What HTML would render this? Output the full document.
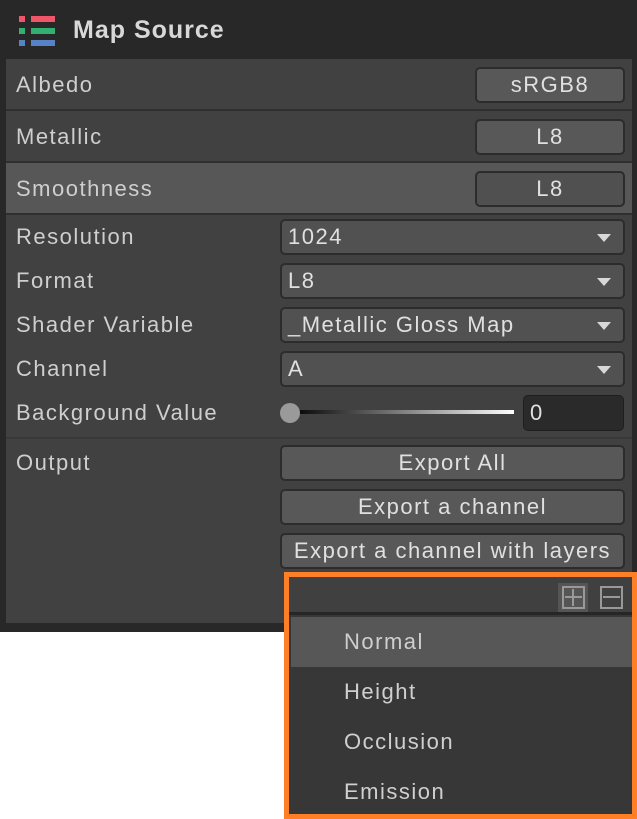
<!DOCTYPE html>
<html><head><style>
*{margin:0;padding:0;box-sizing:border-box}
body{width:637px;height:819px;background:#fff;font-family:"Liberation Sans",sans-serif;color:#d2d2d2;position:relative;overflow:hidden}
.a{position:absolute}
.outer{left:0;top:0;width:637px;height:632px;background:#282828}
.panel{left:6px;top:59px;width:626px;height:564px;background:#414141}
.lbl{font-size:22px;color:#cfcfcf;white-space:nowrap;letter-spacing:1.5px}
.btn{background:#585858;border:2px solid #2c2c2c;border-radius:5px;font-size:22px;color:#e0e0e0;text-align:center;line-height:31px;letter-spacing:1.5px;white-space:nowrap}
.dd{background:#515151;border:2px solid #2c2c2c;border-radius:5px;font-size:22px;color:#e0e0e0;padding-left:6px;line-height:31px;letter-spacing:1.5px}
.dd:after{content:"";position:absolute;right:12px;top:13px;border-left:7px solid transparent;border-right:7px solid transparent;border-top:8px solid #d8d8d8}
</style></head><body>
<div class="a outer"></div>
<div class="a" style="left:19px;top:16px;width:6px;height:6px;background:#f0566a"></div>
<div class="a" style="left:31px;top:16px;width:24px;height:6px;background:#f0566a"></div>
<div class="a" style="left:19px;top:28px;width:6px;height:6px;background:#32b072"></div>
<div class="a" style="left:31px;top:28px;width:24px;height:6px;background:#32b072"></div>
<div class="a" style="left:19px;top:40px;width:6px;height:6px;background:#5783c6"></div>
<div class="a" style="left:31px;top:40px;width:24px;height:6px;background:#5783c6"></div>
<div class="a" style="left:73px;top:16px;font-size:25px;font-weight:bold;color:#d8d8d8;letter-spacing:1px">Map Source</div>
<div class="a panel"></div>
<div class="a" style="left:6px;top:109px;width:626px;height:2px;background:#2f2f2f"></div>
<div class="a" style="left:6px;top:161px;width:626px;height:2px;background:#2f2f2f"></div>
<div class="a" style="left:6px;top:163px;width:626px;height:50px;background:#575757"></div>
<div class="a" style="left:6px;top:213px;width:626px;height:2px;background:#2f2f2f"></div>
<div class="a lbl" style="left:16px;top:72px">Albedo</div>
<div class="a lbl" style="left:16px;top:124px">Metallic</div>
<div class="a lbl" style="left:16px;top:176px">Smoothness</div>
<div class="a btn" style="left:475px;top:67px;width:150px;height:36px">sRGB8</div>
<div class="a btn" style="left:475px;top:119px;width:150px;height:36px">L8</div>
<div class="a btn" style="left:475px;top:171px;width:150px;height:36px;background:#505050">L8</div>
<div class="a lbl" style="left:16px;top:224px">Resolution</div>
<div class="a lbl" style="left:16px;top:268px">Format</div>
<div class="a lbl" style="left:16px;top:312px">Shader Variable</div>
<div class="a lbl" style="left:16px;top:356px">Channel</div>
<div class="a lbl" style="left:16px;top:400px">Background Value</div>
<div class="a lbl" style="left:16px;top:450px">Output</div>
<div class="a dd" style="left:280px;top:219px;width:345px;height:36px">1024</div>
<div class="a dd" style="left:280px;top:263px;width:345px;height:36px">L8</div>
<div class="a dd" style="left:280px;top:307px;width:345px;height:36px">_Metallic Gloss Map</div>
<div class="a dd" style="left:280px;top:351px;width:345px;height:36px">A</div>
<div class="a" style="left:290px;top:410px;width:224px;height:4px;background:linear-gradient(90deg,#000,#fff)"></div>
<div class="a" style="left:280px;top:403px;width:20px;height:20px;border-radius:50%;background:#9a9a9a"></div>
<div class="a" style="left:523px;top:395px;width:101px;height:36px;background:#2a2a2a;border:1px solid #1e1e1e;border-radius:5px;font-size:22px;color:#e0e0e0;padding-left:6px;line-height:34px">0</div>
<div class="a" style="left:6px;top:437px;width:626px;height:2px;background:#383838"></div>
<div class="a btn" style="left:280px;top:445px;width:345px;height:36px">Export All</div>
<div class="a btn" style="left:280px;top:489px;width:345px;height:36px">Export a channel</div>
<div class="a btn" style="left:280px;top:533px;width:345px;height:36px">Export a channel with layers</div>
<div class="a" style="left:284px;top:572px;width:353px;height:247px;background:#ff7f27"></div>
<div class="a" style="left:289px;top:577px;width:343px;height:35px;background:#404040"></div>
<div class="a" style="left:289px;top:612px;width:343px;height:3px;background:#262626"></div>
<div class="a" style="left:289px;top:615px;width:343px;height:199px;background:#373737"></div>
<div class="a" style="left:291px;top:617px;width:341px;height:50px;background:#575757"></div>
<div class="a" style="left:558px;top:583px;width:30px;height:29px;background:#555"></div>
<div class="a" style="left:562px;top:586px;width:23px;height:23px;border:2px solid #999"></div>
<div class="a" style="left:572px;top:589px;width:2px;height:17px;background:#999"></div>
<div class="a" style="left:565px;top:596px;width:17px;height:2px;background:#999"></div>
<div class="a" style="left:600px;top:586px;width:23px;height:23px;border:2px solid #999"></div>
<div class="a" style="left:603px;top:596px;width:17px;height:2px;background:#999"></div>
<div class="a lbl" style="left:344px;top:629px">Normal</div>
<div class="a lbl" style="left:344px;top:679px">Height</div>
<div class="a lbl" style="left:344px;top:729px">Occlusion</div>
<div class="a lbl" style="left:344px;top:779px">Emission</div>
</body></html>
